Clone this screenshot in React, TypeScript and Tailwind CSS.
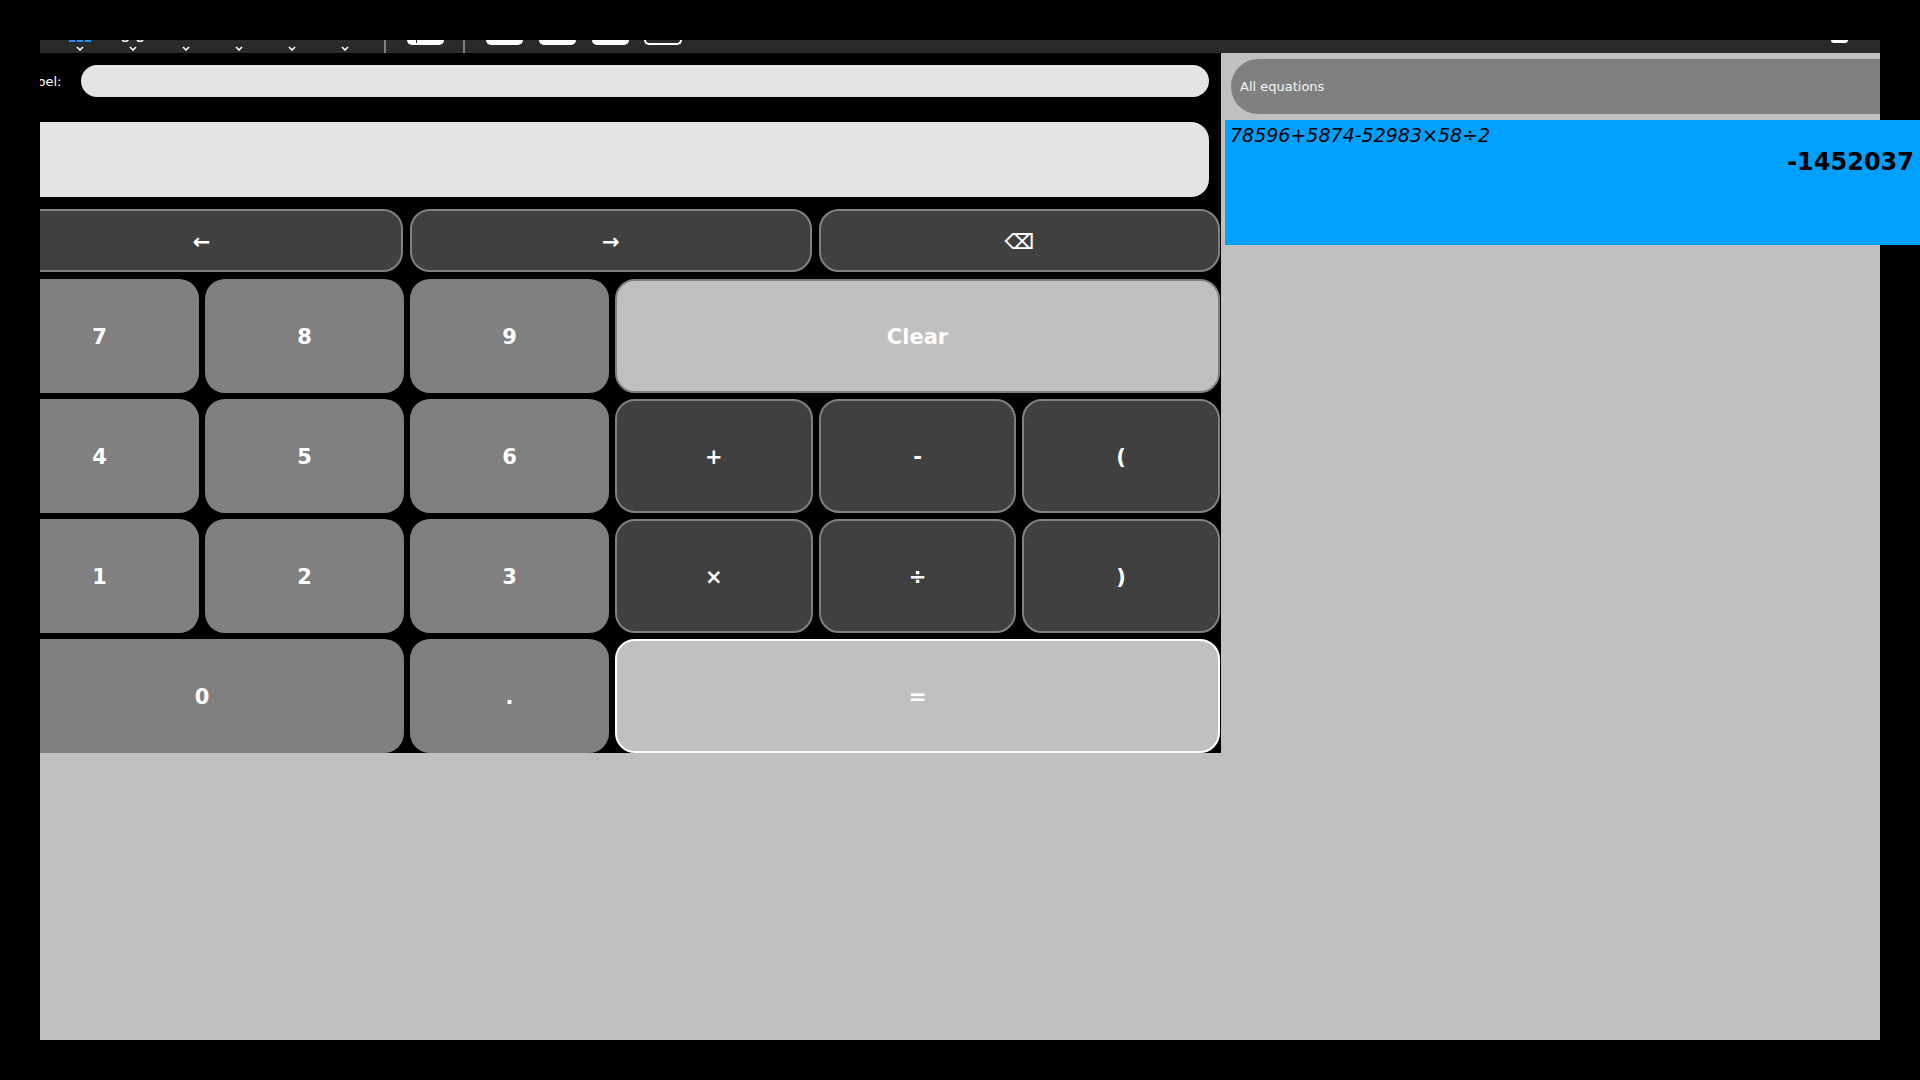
import React from "react";

const Chevron = () => (
  <svg width="8" height="5" viewBox="0 0 8 5" className="block">
    <polyline points="1,1 4,4 7,1" fill="none" stroke="white" strokeWidth="1.6" />
  </svg>
);

const btnBase =
  "flex items-center justify-center rounded-[20px] text-white font-bold text-[21px] leading-none pt-[3px]";
const digit = `${btnBase} bg-[#808080]`;
const op = `${btnBase} bg-[#404040] border-2 border-[#808080]`;

export default function App() {
  return (
    <div className="w-[1920px] h-[1080px] bg-black overflow-hidden pt-[40px] pl-[40px] font-['DejaVu_Sans',sans-serif]">
      <div className="w-[1840px] h-[1000px] flex flex-col">
        {/* toolbar (top clipped) */}
        <div className="h-[13px] shrink-0 bg-[#2a2a2a] flex items-start pl-[13.5px]">
          <div className="w-[53px] h-full flex flex-col items-center">
            <div className="flex gap-[2px] h-[2px]">
              <div className="w-[6px] h-[2px] bg-[#1e90ff]" />
              <div className="w-[6px] h-[2px] bg-[#1e90ff]" />
              <div className="w-[6px] h-[2px] bg-[#1e90ff]" />
            </div>
            <div className="mt-[4px]">
              <Chevron />
            </div>
          </div>
          <div className="w-[53px] h-full flex flex-col items-center">
            <svg width="24" height="2" viewBox="0 0 24 2" className="block">
              <path d="M0.8,-2 A3.4,3.4 0 0 0 7.6,-2" fill="none" stroke="white" strokeWidth="1.6" />
              <path d="M15.6,-2 A3.4,3.4 0 0 0 22.4,-2" fill="none" stroke="white" strokeWidth="1.6" />
            </svg>
            <div className="mt-[4px]">
              <Chevron />
            </div>
          </div>
          {[0, 1, 2, 3].map((i) => (
            <div key={i} className="w-[53px] h-full flex flex-col items-center">
              <div className="h-[2px]" />
              <div className="mt-[4px]">
                <Chevron />
              </div>
            </div>
          ))}
          <div className="ml-[12.5px] w-[1.5px] h-full bg-[#808080]" />
          <div className="ml-[13px] w-[53px] h-full flex justify-center">
            <div className="w-[37px] h-[5px] bg-white rounded-b-[5px] flex">
              <div className="ml-[9px] w-[1px] h-[3px] bg-[#2a2a2a]" />
            </div>
          </div>
          <div className="ml-[11.5px] w-[1.5px] h-full bg-[#808080]" />
          <div className="ml-[13px] w-[53px] h-full flex justify-center">
            <div className="w-[37px] h-[5px] bg-white rounded-b-[5px]" />
          </div>
          <div className="w-[53px] h-full flex justify-center">
            <div className="w-[37px] h-[5px] bg-white rounded-b-[5px]" />
          </div>
          <div className="w-[53px] h-full flex justify-center">
            <div className="w-[37px] h-[5px] bg-white rounded-b-[5px]" />
          </div>
          <div className="w-[53px] h-full flex justify-center">
            <div className="w-[38px] h-[5px] border-2 border-t-0 border-white rounded-b-[5px]" />
          </div>
          <div className="ml-auto mr-[32px] w-[17px] h-[3px] bg-white rounded-b-[3px]" />
        </div>

        <div className="flex-1 flex min-h-0">
          {/* calculator panel */}
          <div className="w-[1181px] shrink-0 flex flex-col overflow-hidden">
            <div className="h-[700px] shrink-0 bg-black">
              <div className="ml-[-40px] w-[1220px] flex flex-col pt-[12px]">
                <div className="h-[32px] flex items-center pl-[22px] pr-[11px] gap-[19.5px]">
                  <span className="text-[13px] text-white leading-none">Label:</span>
                  <div className="flex-1 h-full rounded-full bg-[#e4e4e4]" />
                </div>
                <div className="mt-[25px] h-[75px] w-[1209px] rounded-[18px] bg-[#e4e4e4]" />
                <div className="mt-[12px] h-[63px] grid grid-cols-[403px_1fr_1fr] gap-[7px]">
                  <div className={op}>←</div>
                  <div className={op}>→</div>
                  <div className={op}>⌫</div>
                </div>
                <div className="mt-[7px] h-[474px] grid grid-cols-[199px_199px_199px_1fr_1fr_1fr] grid-rows-4 gap-[6px]">
                  <div className={digit}>7</div>
                  <div className={digit}>8</div>
                  <div className={digit}>9</div>
                  <div className={`${btnBase} col-span-3 bg-[#c0c0c0] border-2 border-[#808080]`}>Clear</div>
                  <div className={digit}>4</div>
                  <div className={digit}>5</div>
                  <div className={digit}>6</div>
                  <div className={op}>+</div>
                  <div className={op}>-</div>
                  <div className={op}>(</div>
                  <div className={digit}>1</div>
                  <div className={digit}>2</div>
                  <div className={digit}>3</div>
                  <div className={op}>×</div>
                  <div className={op}>÷</div>
                  <div className={op}>)</div>
                  <div className={`${digit} col-span-2`}>0</div>
                  <div className={digit}>.</div>
                  <div className={`${btnBase} col-span-3 bg-[#c0c0c0] border-2 border-white`}>=</div>
                </div>
              </div>
            </div>
            <div className="flex-1 bg-[#c0c0c0]" />
          </div>

          {/* history panel */}
          <div className="w-[659px] min-w-0 shrink-0 bg-[#c0c0c0] pt-[6px] flex flex-col">
            <div className="ml-[10px] h-[55px] shrink-0 rounded-l-[27px] bg-[#808080] flex items-center pl-[9px] text-[13px] text-[#f5f5f5]">
              All equations
            </div>
            <div className="mt-[6px] ml-[4px] w-[695px] h-[125px] shrink-0 bg-[#00a0ff] pt-[4px] pl-[5px] pr-[6px] flex flex-col text-black">
              <div className="italic text-[19px] leading-[22px]">78596+5874-52983×58÷2</div>
              <div className="mt-[2px] text-right font-bold text-[24px] leading-[28px]">-1452037</div>
            </div>
          </div>
        </div>
      </div>
    </div>
  );
}
